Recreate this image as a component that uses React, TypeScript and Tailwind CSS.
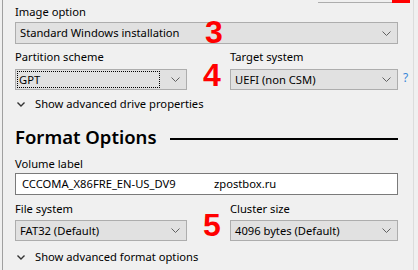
import React from "react"

const font = { fontFamily: '"Noto Sans", "Open Sans", sans-serif' }
const digitFont = { fontFamily: '"Liberation Sans", Arial, sans-serif' }

function Chevron({ className = "" }: { className?: string }) {
  return (
    <svg width="9" height="5" viewBox="0 0 9 5" className={className}>
      <polyline points="0.5,0.5 4.5,4.5 8.5,0.5" fill="none" stroke="#606060" strokeWidth="1" />
    </svg>
  )
}

function Dropdown({ value, focused = false, h = "h-[21px]" }: { value: string; focused?: boolean; h?: string }) {
  return (
    <div className={`flex items-center ${h} bg-[#e1e1e1] border border-[#adadad]`}>
      {focused ? (
        <div className="flex-1 self-stretch m-[1px] border border-dotted border-black flex items-center pl-[1px] text-[11.2px] text-black">
          {value}
        </div>
      ) : (
        <div className="flex-1 pl-[4px] text-[11.2px] text-black">{value}</div>
      )}
      <Chevron className="ml-[10px] mr-[6px]" />
    </div>
  )
}

function Expander({ label }: { label: string }) {
  return (
    <div className="flex items-center h-[16px] text-[11.2px] text-black">
      <svg width="8" height="5" viewBox="0 0 8 5" className="ml-[2px] mr-[10px]">
        <polyline points="0.5,0.5 4,4 7.5,0.5" fill="none" stroke="#333" strokeWidth="1.4" />
      </svg>
      {label}
    </div>
  )
}

export default function App() {
  return (
    <div className="relative w-[418px] h-[270px] overflow-hidden bg-[#f0f0f0] leading-[16px]" style={font}>
      <div className="flex h-full">
        <div className="w-[2px]" />
        <div className="w-[1px] bg-[#a0a0a0]" />
        <div className="flex-1 flex flex-col pl-[12px] pr-[15px]">
          {/* cropped controls at the top */}
          <div className="flex justify-end h-[3px] -mr-[12px]">
            <div className="w-[74px] border-b border-[#adadad]" />
            <div className="w-[18px] bg-[#ff0000]" />
          </div>

          <div className="mt-[1px] text-[11.2px] text-black">Image option</div>
          <div className="mt-[2px]">
            <Dropdown value="Standard Windows installation" h="h-[22px]" />
          </div>

          <div className="mt-[5px] flex gap-[43px]">
            <div className="w-[172px] flex flex-col">
              <div className="text-[11.2px] text-black">Partition scheme</div>
              <div className="mt-[4px]">
                <Dropdown value="GPT" focused />
              </div>
            </div>
            <div className="flex-1 flex flex-col">
              <div className="text-[11.2px] text-black">Target system</div>
              <div className="mt-[4px] relative">
                <Dropdown value="UEFI (non CSM)" />
                <span className="absolute left-full top-[1px] ml-[5px] text-[12px] text-[#3a87d8]">?</span>
              </div>
            </div>
          </div>

          <div className="mt-[6px]">
            <Expander label="Show advanced drive properties" />
          </div>

          <div className="mt-[13px] flex items-center h-[24px]">
            <span className="text-[18.5px] font-semibold text-black leading-[24px]">Format Options</span>
            <div className="flex-1 ml-[13px] mt-[4px] h-[2px] bg-black" />
          </div>

          <div className="mt-[7px] text-[11.2px] text-black">Volume label</div>
          <div className="mt-[1px] flex items-center h-[22px] bg-white border border-[#7a7a7a] pl-[6px] text-[11.2px] text-black">
            <span className="w-[192px]">CCCOMA_X86FRE_EN-US_DV9</span>
            <span>zpostbox.ru</span>
          </div>

          <div className="mt-[6px] flex gap-[43px]">
            <div className="w-[172px] flex flex-col">
              <div className="text-[11.2px] text-black">File system</div>
              <div className="mt-[3px]">
                <Dropdown value="FAT32 (Default)" />
              </div>
            </div>
            <div className="flex-1 flex flex-col">
              <div className="text-[11.2px] text-black">Cluster size</div>
              <div className="mt-[3px]">
                <Dropdown value="4096 bytes (Default)" />
              </div>
            </div>
          </div>

          <div className="mt-[8px]">
            <Expander label="Show advanced format options" />
          </div>
        </div>
        <div className="w-[1px] bg-[#dcdcdc] mr-[4px]" />
      </div>

      {/* annotation numbers */}
      <span className="absolute left-[205px] top-[16px] text-[32px] leading-none font-bold text-[#ff0000]" style={digitFont}>3</span>
      <span className="absolute left-[203px] top-[59px] text-[32px] leading-none font-bold text-[#ff0000]" style={digitFont}>4</span>
      <span className="absolute left-[203px] top-[209px] text-[32px] leading-none font-bold text-[#ff0000]" style={digitFont}>5</span>
    </div>
  )
}
